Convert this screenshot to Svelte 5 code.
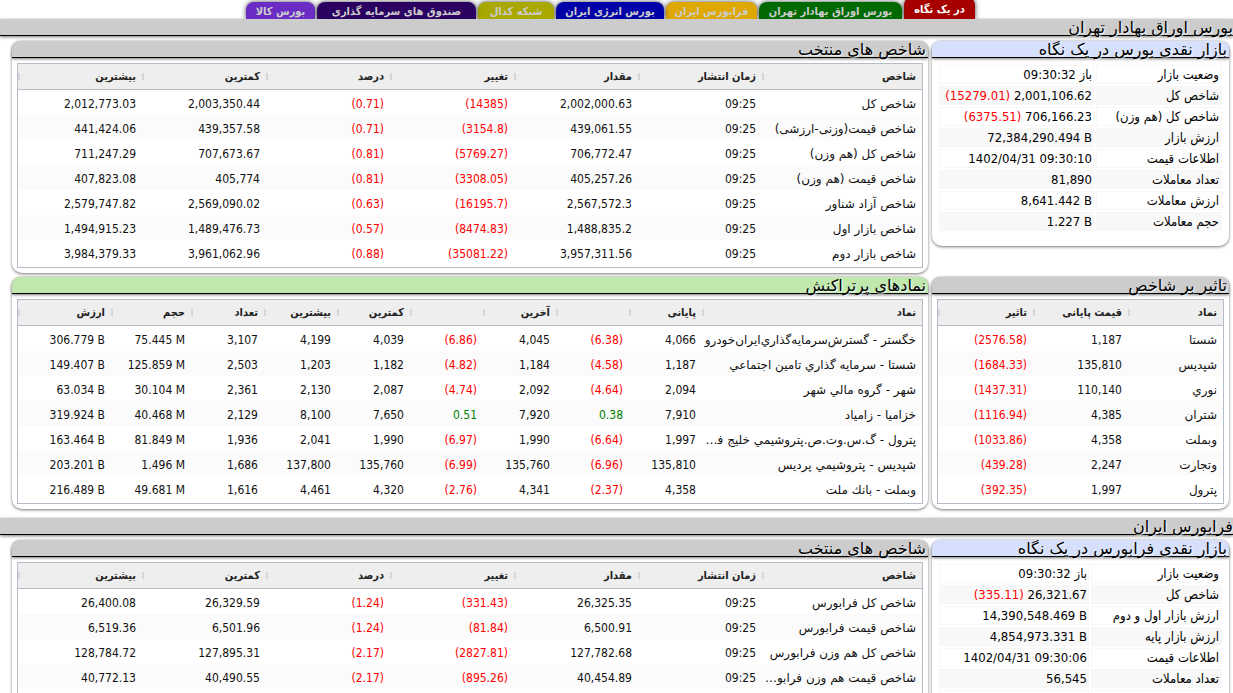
<script>
  const tabs = [
    { label: 'در یک نگاه', color: '#a60000', width: 71, active: true },
    { label: 'بورس اوراق بهادار تهران', color: '#006a00', width: 143 },
    { label: 'فرابورس ایران', color: '#dfa800', width: 91 },
    { label: 'بورس انرژی ایران', color: '#0000a8', width: 108 },
    { label: 'شبکه کدال', color: '#a8a800', width: 76 },
    { label: 'صندوق های سرمایه گذاری', color: '#2a0060', width: 159 },
    { label: 'بورس کالا', color: '#6a2cc4', width: 69 }
  ];

  const indexCols = [
    { label: 'شاخص' },
    { label: 'زمان انتشار', width: 124 },
    { label: 'مقدار', width: 124 },
    { label: 'تغییر', width: 124 },
    { label: 'درصد', width: 124 },
    { label: 'کمترین', width: 124 },
    { label: 'بیشترین', width: 124 }
  ];
  const tradedCols = [
    { label: 'نماد' },
    { label: 'پایانی', width: 73 },
    { label: '', width: 73 },
    { label: 'آخرین', width: 73 },
    { label: '', width: 73 },
    { label: 'کمترین', width: 73 },
    { label: 'بیشترین', width: 73 },
    { label: 'تعداد', width: 73 },
    { label: 'حجم', width: 80 },
    { label: 'ارزش', width: 93 }
  ];
  const impactCols = [
    { label: 'نماد' },
    { label: 'قیمت پایانی', width: 95 },
    { label: 'تاثیر', width: 95 }
  ];

  const indices = [
    ['شاخص کل', '09:25', '2,002,000.63', '(14385)', '(0.71)', '2,003,350.44', '2,012,773.03'],
    ['شاخص قیمت(وزنی-ارزشی)', '09:25', '439,061.55', '(3154.8)', '(0.71)', '439,357.58', '441,424.06'],
    ['شاخص کل (هم وزن)', '09:25', '706,772.47', '(5769.27)', '(0.81)', '707,673.67', '711,247.29'],
    ['شاخص قیمت (هم وزن)', '09:25', '405,257.26', '(3308.05)', '(0.81)', '405,774', '407,823.08'],
    ['شاخص آزاد شناور', '09:25', '2,567,572.3', '(16195.7)', '(0.63)', '2,569,090.02', '2,579,747.82'],
    ['شاخص بازار اول', '09:25', '1,488,835.2', '(8474.83)', '(0.57)', '1,489,476.73', '1,494,915.23'],
    ['شاخص بازار دوم', '09:25', '3,957,311.56', '(35081.22)', '(0.88)', '3,961,062.96', '3,984,379.33']
  ];
  const traded = [
    ['خگستر - گسترش‌سرمايه‌گذاري‌ايران‌خودرو', '4,066', '(6.38)', '4,045', '(6.86)', '4,039', '4,199', '3,107', '75.445 M', '306.779 B'],
    ['شستا - سرمايه گذاري تامين اجتماعي', '1,187', '(4.58)', '1,184', '(4.82)', '1,182', '1,203', '2,503', '125.859 M', '149.407 B'],
    ['شهر - گروه مالي شهر', '2,094', '(4.64)', '2,092', '(4.74)', '2,087', '2,130', '2,361', '30.104 M', '63.034 B'],
    ['خزاميا - زامياد', '7,910', '0.38', '7,920', '0.51', '7,650', '8,100', '2,129', '40.468 M', '319.924 B'],
    ['پترول - گ.س.وت.ص.پتروشيمي خليج فارس', '1,997', '(6.64)', '1,990', '(6.97)', '1,990', '2,041', '1,936', '81.849 M', '163.464 B'],
    ['شپديس - پتروشيمي پرديس', '135,810', '(6.96)', '135,760', '(6.99)', '135,760', '137,800', '1,686', '1.496 M', '203.201 B'],
    ['وبملت - بانك ملت', '4,358', '(2.37)', '4,341', '(2.76)', '4,320', '4,461', '1,616', '49.681 M', '216.489 B']
  ];
  const impact = [
    ['شستا', '1,187', '(2576.58)'],
    ['شپديس', '135,810', '(1684.33)'],
    ['نوري', '110,140', '(1437.31)'],
    ['شتران', '4,385', '(1116.94)'],
    ['وبملت', '4,358', '(1033.86)'],
    ['وتجارت', '2,247', '(439.28)'],
    ['پترول', '1,997', '(392.35)']
  ];
  const otcIndices = [
    ['شاخص کل فرابورس', '09:25', '26,325.35', '(331.43)', '(1.24)', '26,329.59', '26,400.08'],
    ['شاخص قیمت فرابورس', '09:25', '6,500.91', '(81.84)', '(1.24)', '6,501.96', '6,519.36'],
    ['شاخص کل هم وزن فرابورس', '09:25', '127,782.68', '(2827.81)', '(2.17)', '127,895.31', '128,784.72'],
    ['شاخص قیمت هم وزن فرابورس', '09:25', '40,454.89', '(895.26)', '(2.17)', '40,490.55', '40,772.13'],
    ['', '', '', '', '', '', '']
  ];

  const overview = [
    { label: 'وضعیت بازار', state: 'باز', value: '09:30:32' },
    { label: 'شاخص کل', value: '2,001,106.62', change: '(15279.01)' },
    { label: 'شاخص کل (هم وزن)', value: '706,166.23', change: '(6375.51)' },
    { label: 'ارزش بازار', value: '72,384,290.494 B' },
    { label: 'اطلاعات قیمت', value: '1402/04/31 09:30:10' },
    { label: 'تعداد معاملات', value: '81,890' },
    { label: 'ارزش معاملات', value: '8,641.442 B' },
    { label: 'حجم معاملات', value: '1.227 B' }
  ];
  const otcOverview = [
    { label: 'وضعیت بازار', state: 'باز', value: '09:30:32' },
    { label: 'شاخص کل', value: '26,321.67', change: '(335.11)' },
    { label: 'ارزش بازار اول و دوم', value: '14,390,548.469 B' },
    { label: 'ارزش بازار پایه', value: '4,854,973.331 B' },
    { label: 'اطلاعات قیمت', value: '1402/04/31 09:30:06' },
    { label: 'تعداد معاملات', value: '56,545' },
    { label: '', value: '' }
  ];

  // Signed columns of each grid: falls are in parentheses, rises are plain.
  const tone = (cell, i, signed) =>
    cell && signed.includes(i) ? (cell.startsWith('(') ? 'down' : 'up') : '';
</script>

{#snippet grid(cols, rows, signed)}
  <div class="grid">
    <table>
      <colgroup>
        {#each cols as c}
          <col style={c.width ? `width:${c.width}px` : ''} />
        {/each}
      </colgroup>
      <thead>
        <tr>
          {#each cols as c}<th scope="col">{c.label}</th>{/each}
        </tr>
      </thead>
      <tbody>
        {#each rows as row}
          <tr>
            {#each row as cell, i}
              <td class={tone(cell, i, signed)}>
                {#if i === 0}{cell}{:else}<bdi dir="ltr">{cell}</bdi>{/if}
              </td>
            {/each}
          </tr>
        {/each}
      </tbody>
    </table>
  </div>
{/snippet}

{#snippet facts(rows, labelWidth)}
  <table class="facts">
    <colgroup><col style="width:{labelWidth}px" /><col /></colgroup>
    <tbody>
      {#each rows as r}
        <tr>
          <th scope="row">{r.label}</th>
          <td>
            {r.state ? r.state + ' ' : ''}<bdi dir="ltr">{r.value}</bdi>
            {#if r.change}<bdi dir="ltr" class="down">{r.change}</bdi>{/if}
          </td>
        </tr>
      {/each}
    </tbody>
  </table>
{/snippet}

<div class="page" dir="rtl" lang="fa">
  <nav>
    {#each tabs as t}
      <button type="button" class:active={t.active} style="background:{t.color};width:{t.width}px">{t.label}</button>
    {/each}
  </nav>

  <section>
    <h1>بورس اوراق بهادار تهران</h1>
    <div class="cards">
      <article class="short">
        <h2 class="blue">بازار نقدی بورس در یک نگاه</h2>
        {@render facts(overview, 126)}
      </article>
      <article>
        <h2>شاخص های منتخب</h2>
        {@render grid(indexCols, indices, [3, 4])}
      </article>
      <article>
        <h2>تاثیر بر شاخص</h2>
        {@render grid(impactCols, impact, [2])}
      </article>
      <article>
        <h2 class="green">نمادهای پرتراکنش</h2>
        {@render grid(tradedCols, traded, [2, 4])}
      </article>
    </div>
  </section>

  <section>
    <h1>فرابورس ایران</h1>
    <div class="cards">
      <article>
        <h2 class="blue">بازار نقدی فرابورس در یک نگاه</h2>
        {@render facts(otcOverview, 131)}
      </article>
      <article>
        <h2>شاخص های منتخب</h2>
        {@render grid(indexCols, otcIndices, [3, 4])}
      </article>
    </div>
  </section>
</div>

<style>
  :global(body) {
    margin: 0;
    background: #fff;
  }
  .page {
    height: 100vh;
    overflow: hidden;
    font-family: Tahoma, 'DejaVu Sans', sans-serif;
    font-size: 12px;
    color: #000;
  }
  nav {
    display: flex;
    justify-content: center;
    align-items: flex-end;
    gap: 2px;
    box-sizing: border-box;
    height: 19px;
    padding-right: 12px;
    overflow: hidden;
  }
  nav button {
    flex: none;
    height: 17px;
    padding: 2px 0 0;
    border: 0;
    border-radius: 8px 8px 0 0;
    box-shadow: 0 0 5px #444;
    color: #ccc;
    font: bold 11px/15px Tahoma, 'DejaVu Sans Condensed', 'DejaVu Sans', sans-serif;
    white-space: nowrap;
    cursor: pointer;
  }
  nav button.active {
    height: 22px;
    color: #fff;
  }
  h1,
  h2 {
    margin: 0;
    height: 16px;
    border-bottom: 1px solid #000;
    background: #ccc;
    box-shadow: 0 1px 3px #777;
    font-size: 16px;
    line-height: 18px;
    font-weight: normal;
    white-space: nowrap;
    text-shadow: 1px 1px 2px #fff;
  }
  h2 {
    padding-right: 2px;
    border-radius: 8px 8px 0 0;
  }
  h2.blue {
    background: #d6e0fc;
  }
  h2.green {
    background: #c0e8ac;
  }
  .cards {
    display: grid;
    grid-template-columns: 297px minmax(0, 1fr);
    gap: 4px;
    padding: 5px 4px 9px 12px;
  }
  article {
    padding-bottom: 5px;
    border-radius: 10px;
    box-shadow: 0 1px 3px #777;
    background: #fff;
  }
  article.short {
    align-self: start;
    padding-bottom: 13px;
  }
  .grid {
    margin: 5px 5px 0;
    padding-bottom: 2px;
    border: 1px solid #b8bcc8;
  }
  .grid table {
    width: 100%;
    table-layout: fixed;
    border-collapse: separate;
    border-spacing: 0;
  }
  .grid th,
  .grid td {
    box-sizing: border-box;
    padding: 0 6px 0 4px;
    text-align: right;
    white-space: nowrap;
    overflow: hidden;
    text-overflow: ellipsis;
  }
  .grid th {
    height: 26px;
    border-bottom: 1px solid #b8bcc8;
    background: linear-gradient(#d3d7dc, #d3d7dc) left 0 top 9px / 2px 7px no-repeat #eee;
    color: #222;
    font-family: Tahoma, 'DejaVu Sans Condensed', 'DejaVu Sans', sans-serif;
    font-size: 11px;
    line-height: 25px;
  }
  .grid td {
    height: 25px;
    padding-top: 4px;
    line-height: 21px;
    color: #111;
  }
  .grid th:first-child,
  .grid td:first-child {
    padding-left: 0;
  }
  .grid tbody tr:nth-child(even) {
    background: #fbfbfb;
  }
  bdi,
  .facts {
    font-family: Tahoma, 'DejaVu Sans Condensed', 'DejaVu Sans', sans-serif;
  }
  .grid td.down,
  .down {
    color: #f00;
  }
  .grid td.up {
    color: #008000;
  }
  .facts {
    width: calc(100% - 10px);
    margin: 5px 5px 0;
    table-layout: fixed;
    border-collapse: separate;
    border-spacing: 2px;
    font-size: 13px;
  }
  .facts th,
  .facts td {
    box-sizing: border-box;
    height: 19px;
    padding: 0 2px;
    border: 1px solid #f7f7f7;
    font-weight: normal;
    line-height: 17px;
    text-align: right;
    white-space: nowrap;
  }
  .facts td {
    padding: 0 1px;
  }
  .facts tr:nth-child(even) > * {
    background: #f8f8f8;
  }
</style>
